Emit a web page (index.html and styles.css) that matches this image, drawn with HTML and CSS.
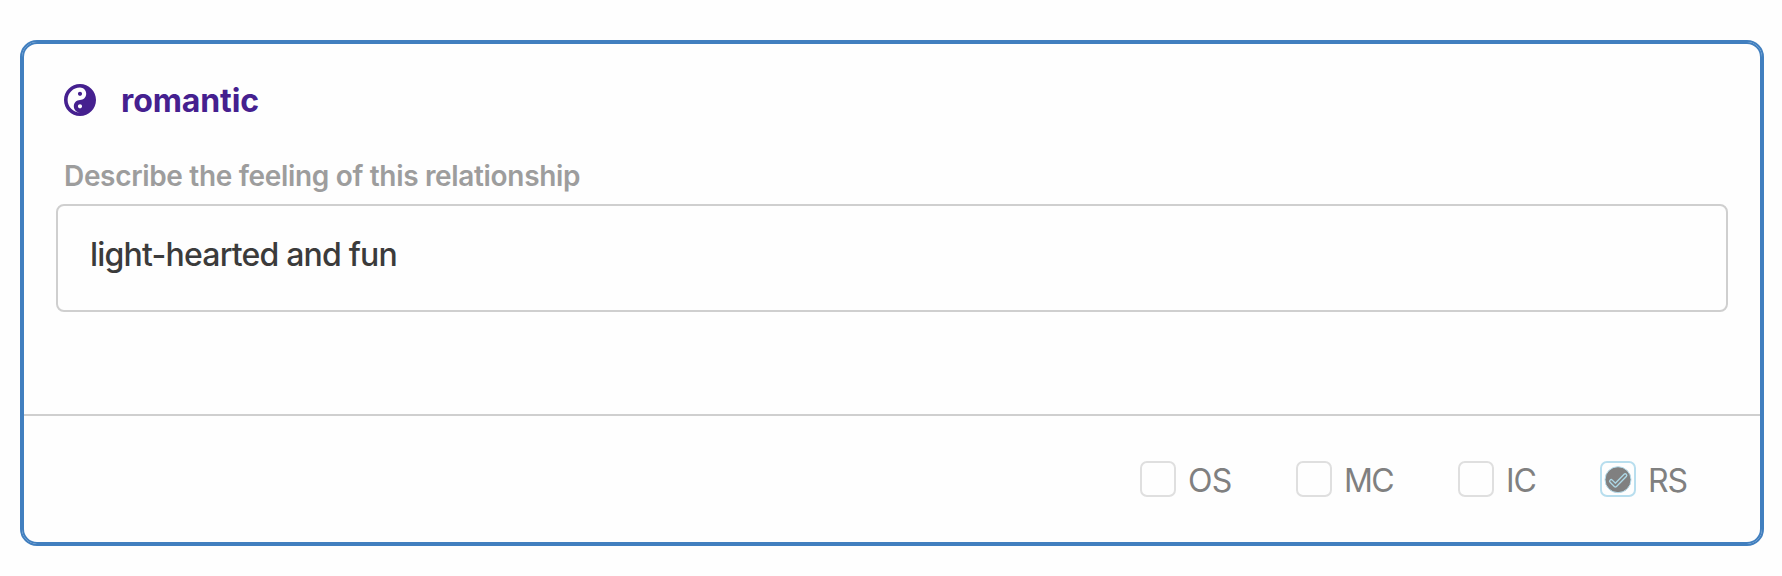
FILE: index.html
```html
<!DOCTYPE html>
<html lang="en">
<head>
    <meta charset="UTF-8">
    <meta name="viewport" content="width=device-width, initial-scale=1.0">
    <title>Relationship</title>
    <link rel="stylesheet" href="styles.css">
</head>
<body>
    <div class="card">
        <div class="card-body">
            <div class="card-title">
                <svg class="icon" viewBox="0 8 496 496">
                    <path fill="currentColor" d="M248 8C111.03 8 0 119.03 0 256s111.03 248 248 248 248-111.03 248-248S384.97 8 248 8zm0 376c-17.67 0-32-14.33-32-32s14.33-32 32-32 32 14.33 32 32-14.33 32-32 32zm0-128c-53.02 0-96 42.98-96 96s42.98 96 96 96c-106.04 0-192-85.96-192-192S141.96 64 248 64c53.02 0 96 42.98 96 96s-42.98 96-96 96zm0-128c-17.67 0-32 14.33-32 32s14.33 32 32 32 32-14.33 32-32-14.33-32-32-32z"/>
                </svg>
                <h2>romantic</h2>
            </div>
            <div class="field-label">Describe the feeling of this relationship</div>
            <div class="field">light-hearted and fun</div>
        </div>
        <div class="card-footer">
            <div class="check os"><span class="box"></span><span>OS</span></div>
            <div class="check mc"><span class="box"></span><span>MC</span></div>
            <div class="check ic"><span class="box"></span><span>IC</span></div>
            <div class="check rs">
                <span class="box checked">
                    <svg viewBox="0 0 32 32">
                        <circle class="dot" cx="16" cy="16.7" r="13"/>
                        <path class="tick-edge" d="M9.2 18.2l4.2 4.2 9.8-10"/>
                        <path class="tick" d="M9.2 18.2l4.2 4.2 9.8-10"/>
                    </svg>
                </span>
                <span>RS</span>
            </div>
        </div>
    </div>
</body>
</html>
```
FILE: styles.css
```css
* {
    box-sizing: border-box;
}
body {
    margin: 0;
    padding: 40px 18px 30px 20px;
    background-color: #fefefe;
    font-family: Inter, "Liberation Sans", sans-serif;
}
.card {
    display: flex;
    flex-direction: column;
    height: 506px;
    padding: 2px;
    border: 2px solid #417fbf;
    border-radius: 17px;
    box-shadow: inset 0 0 0 2px #417fbf;
}
.card-body {
    height: 372px;
    padding: 34px 32px 0;
    border-bottom: 2px solid #cfcfcf;
}
.card-title {
    display: flex;
    align-items: center;
    gap: 25px;
    height: 44px;
    padding-left: 8px;
    color: #45208f;
}
.icon {
    width: 32px;
    height: 32px;
}
h2 {
    margin: 0;
    padding-top: 2px;
    font-size: 32px;
    font-weight: 700;
    line-height: 44px;
    letter-spacing: -0.1px;
}
.field-label {
    margin-top: 34px;
    padding-left: 8px;
    height: 48px;
    color: #9d9d9d;
    font-size: 28px;
    font-weight: 600;
    line-height: 41px;
    letter-spacing: -0.33px;
}
.field {
    height: 108px;
    padding: 27px 32px;
    border: 2px solid #cfcfcf;
    border-radius: 8px;
    color: #3b3b3b;
    font-size: 32px;
    font-weight: 450;
    line-height: 44px;
    letter-spacing: -0.8px;
}
.card-footer {
    display: flex;
    flex: 1;
    justify-content: flex-end;
    padding: 45px 72px 0 0;
}
.check {
    display: flex;
    gap: 12px;
    height: 36px;
    color: #808080;
    font-size: 32px;
    line-height: 40px;
    letter-spacing: -1px;
}
.os {
    width: 156px;
    letter-spacing: -0.6px;
}
.mc {
    width: 162px;
    letter-spacing: -1.6px;
}
.ic {
    width: 142px;
}
.rs {
    width: 88px;
}
.box {
    width: 36px;
    height: 36px;
    border: 2px solid #dfdfdf;
    border-radius: 7px;
}
.checked {
    border-color: #b8deee;
}
.box svg {
    display: block;
    width: 32px;
    height: 32px;
}
.dot {
    fill: #808080;
    stroke: #b8deee;
    stroke-width: 1;
}
.tick-edge, .tick {
    fill: none;
    stroke: #add8e6;
    stroke-width: 4.4;
    stroke-linecap: round;
    stroke-linejoin: round;
}
.tick {
    stroke: #808080;
    stroke-width: 1.8;
}
```
